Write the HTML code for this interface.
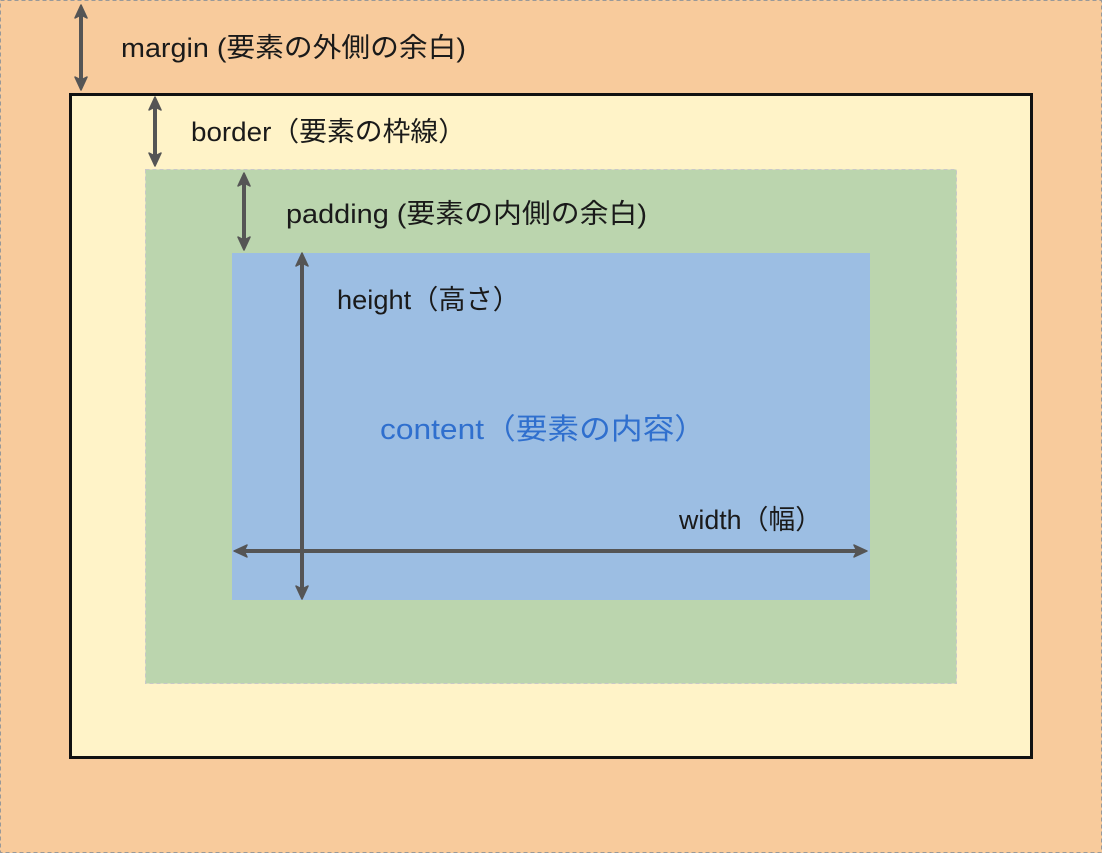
<!DOCTYPE html>
<html><head><meta charset="utf-8"><style>
html,body{margin:0;padding:0;width:1102px;height:853px;overflow:hidden;background:#f8cb9c}
svg{display:block}
text{font-family:"Liberation Sans","Noto Sans CJK JP",sans-serif;font-size:27px;fill:#1a1a1a}
</style></head><body>
<svg width="1102" height="853" viewBox="0 0 1102 853" xmlns="http://www.w3.org/2000/svg">
<rect x="0.5" y="0.5" width="1101" height="852" fill="#f8cb9c" stroke="#999" stroke-dasharray="4,3"/>
<rect x="70.5" y="94.5" width="961" height="663" fill="#fff3c8" stroke="#111" stroke-width="3"/>
<rect x="145.5" y="169.5" width="811" height="514" fill="#bbd5ae" stroke="#c8c8c8" stroke-dasharray="4,3"/>
<rect x="232" y="253" width="638" height="347" fill="#9cbee3"/>
<g stroke="#555" stroke-width="4">
<line x1="81" y1="10" x2="81" y2="85"/>
<line x1="155" y1="102" x2="155" y2="161"/>
<line x1="244" y1="178" x2="244" y2="245"/>
<line x1="302" y1="258" x2="302" y2="594"/>
<line x1="239" y1="551" x2="862" y2="551"/>
</g>
<g fill="#555" stroke="#555" stroke-width="1.5" stroke-linejoin="round">
<polygon points="81,5 75,18 81,15 87,18"/>
<polygon points="81,90 75,77 81,80 87,77"/>
<polygon points="155,97 149,110 155,107 161,110"/>
<polygon points="155,166 149,153 155,156 161,153"/>
<polygon points="244,173 238,186 244,183 250,186"/>
<polygon points="244,250 238,237 244,240 250,237"/>
<polygon points="302,253 296,266 302,263 308,266"/>
<polygon points="302,599 296,586 302,589 308,586"/>
<polygon points="234,551 247,545 244,551 247,557"/>
<polygon points="867,551 854,545 857,551 854,557"/>
</g>
<text x="121" y="57" textLength="345" lengthAdjust="spacingAndGlyphs">margin (要素の外側の余白)</text>
<text x="191" y="141" textLength="275" lengthAdjust="spacingAndGlyphs">border（要素の枠線）</text>
<text x="286" y="223" textLength="361" lengthAdjust="spacingAndGlyphs">padding (要素の内側の余白)</text>
<text x="337" y="309" textLength="183" lengthAdjust="spacingAndGlyphs">height（高さ）</text>
<text x="380" y="439" textLength="326" lengthAdjust="spacingAndGlyphs" style="fill:#2f6fce;font-size:29px">content（要素の内容）</text>
<text x="679" y="529" textLength="143" lengthAdjust="spacingAndGlyphs">width（幅）</text>
</svg>
</body></html>
